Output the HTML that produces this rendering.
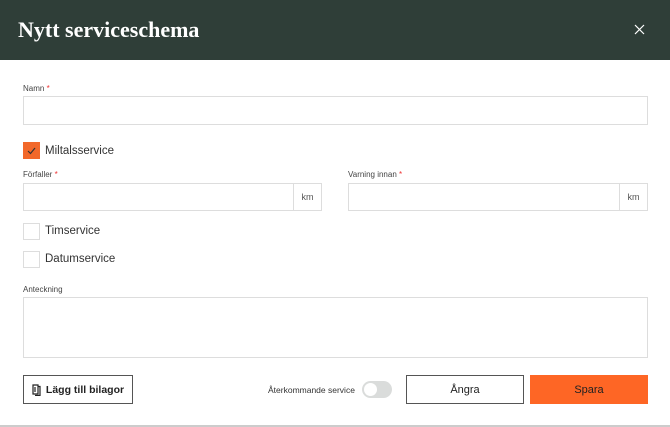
<!DOCTYPE html>
<html><head><style>
*{box-sizing:border-box;margin:0;padding:0}
body{width:670px;height:427px;background:#fff;font-family:"Liberation Sans",sans-serif;position:relative;overflow:hidden;color:#333}
.hdr{position:absolute;left:0;top:0;width:670px;height:60px;background:#2f3e38}
.hdr h1{position:absolute;left:18px;top:17px;font-family:"Liberation Serif",serif;font-size:22px;color:#fff;font-weight:bold}
.x{position:absolute;left:634px;top:24px}
.a{position:absolute}
.lbl{font-size:8px;color:#444}
.lbl b{color:#e33;font-weight:normal}
.in{border:1px solid #ddd;background:#fff}
.cb{width:17px;height:17px;border:1px solid #ddd}
.ct{font-size:11.5px;color:#333}
.km{position:absolute;right:0;top:0;bottom:0;width:28px;border-left:1px solid #ddd;font-size:9px;color:#555;display:flex;align-items:center;justify-content:center}
.btn{border:1px solid #555;font-size:10.5px;font-weight:bold;display:flex;align-items:center;justify-content:center;color:#222}
</style></head><body>
<div class="hdr"><h1>Nytt serviceschema</h1><svg class="x" width="11" height="11" viewBox="0 0 11 11"><path d="M1 1l9 9M10 1l-9 9" stroke="#fff" stroke-width="1.2"/></svg></div>
<div class="a lbl" style="left:23px;top:84px">Namn <b>*</b></div>
<div class="a in" style="left:23px;top:96px;width:625px;height:29px"></div>
<div class="a cb" style="left:23px;top:142px;background:#f2682a;border-color:#f2682a"><svg width="15" height="15" viewBox="0 0 15 15"><path d="M4 8l2.5 2.5L11 5" stroke="#333" stroke-width="1.2" fill="none"/></svg></div>
<div class="a ct" style="left:45px;top:145px">Miltalsservice</div>
<div class="a lbl" style="left:23px;top:170px">Förfaller <b>*</b></div>
<div class="a in" style="left:23px;top:183px;width:299px;height:28px"><div class="km">km</div></div>
<div class="a lbl" style="left:348px;top:170px">Varning innan <b>*</b></div>
<div class="a in" style="left:348px;top:183px;width:300px;height:28px"><div class="km">km</div></div>
<div class="a cb" style="left:23px;top:223px"></div>
<div class="a ct" style="left:45px;top:225px">Timservice</div>
<div class="a cb" style="left:23px;top:251px"></div>
<div class="a ct" style="left:45px;top:253px">Datumservice</div>
<div class="a lbl" style="left:23px;top:285px">Anteckning</div>
<div class="a in" style="left:23px;top:297px;width:625px;height:61px"></div>
<div class="a btn" style="left:23px;top:375px;width:110px;height:29px"><svg width="9" height="12" viewBox="0 0 9 12" style="margin-right:5px"><path d="M1 1h5v9H1zM3 3v5M6 2.5h2v9H3" stroke="#222" stroke-width="1.2" fill="none"/></svg>Lägg till bilagor</div>
<div class="a" style="left:268px;top:385px;font-size:8.5px;color:#333">Återkommande service</div>
<div class="a" style="left:362px;top:381px;width:30px;height:17px;border-radius:9px;background:#dadcdb"><div style="position:absolute;left:2px;top:2px;width:13px;height:13px;border-radius:50%;background:#fff"></div></div>
<div class="a btn" style="left:406px;top:375px;width:118px;height:29px;font-weight:normal;font-size:11px">Ångra</div>
<div class="a btn" style="left:530px;top:375px;width:118px;height:29px;background:#fe6625;border-color:#fe6625;font-weight:normal;font-size:11px">Spara</div>
<div class="a" style="left:0;top:425px;width:670px;height:2px;background:#ccc"></div>
</body></html>
